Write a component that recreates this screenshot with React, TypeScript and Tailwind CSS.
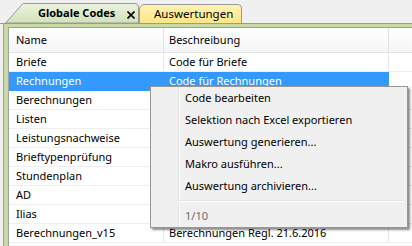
import React from 'react';

const rows: { name: string; desc: string }[] = [
  { name: 'Briefe', desc: 'Code für Briefe' },
  { name: 'Rechnungen', desc: 'Code für Rechnungen' },
  { name: 'Berechnungen', desc: '' },
  { name: 'Listen', desc: '' },
  { name: 'Leistungsnachweise', desc: '' },
  { name: 'Brieftypenprüfung', desc: '' },
  { name: 'Stundenplan', desc: '' },
  { name: 'AD', desc: '' },
  { name: 'Ilias', desc: '' },
  { name: 'Berechnungen_v15', desc: 'Berechnungen Regl. 21.6.2016' },
];

const menuItems = [
  'Code bearbeiten',
  'Selektion nach Excel exportieren',
  'Auswertung generieren...',
  'Makro ausführen...',
  'Auswertung archivieren...',
];

const font = { fontFamily: '"Noto Sans", "Open Sans", sans-serif' };

export default function App() {
  return (
    <div
      className="relative w-[412px] h-[246px] overflow-hidden bg-[#f0f0f0] flex flex-col text-[11px] text-black"
      style={font}
    >
      {/* tabs */}
      <div className="h-[24px] flex items-end pl-[5px] border-b border-[#9a9a9a]">
        <div className="relative h-[20px] w-[134px] flex items-center">
          <svg className="absolute inset-0" width="134" height="20" viewBox="0 0 134 20">
            <defs>
              <linearGradient id="g1" x1="0" y1="0" x2="0" y2="1">
                <stop offset="0" stopColor="#ecf2e0" />
                <stop offset="1" stopColor="#d3e2b8" />
              </linearGradient>
            </defs>
            <path d="M0.5 20 L18 0.5 L130 0.5 Q133.5 0.5 133.5 4 L133.5 20 Z" fill="url(#g1)" stroke="#9a9a9a" />
          </svg>
          <span className="relative ml-[33px] font-bold text-[11px]">Globale Codes</span>
          <svg className="absolute left-[122px] top-[8px]" width="8" height="8" viewBox="0 0 8 8">
            <path d="M0.5 0.5 L7.5 7.5 M7.5 0.5 L0.5 7.5" stroke="#000" strokeWidth="1.6" />
          </svg>
        </div>
        <div className="relative h-[20px] w-[103px] flex items-center -mb-px">
          <svg className="absolute inset-0" width="103" height="20" viewBox="0 0 103 20">
            <defs>
              <linearGradient id="g2" x1="0" y1="0" x2="0" y2="1">
                <stop offset="0" stopColor="#fff3b4" />
                <stop offset="1" stopColor="#fde486" />
              </linearGradient>
            </defs>
            <path d="M0.5 20 L0.5 4 L3.5 0.5 L99 0.5 Q102.5 0.5 102.5 4 L102.5 19.5 L0.5 19.5" fill="url(#g2)" stroke="#9a9a9a" />
          </svg>
          <span className="relative ml-[15px] text-[11.5px]">Auswertungen</span>
        </div>
      </div>

      {/* panel */}
      <div className="flex-1 ml-[3px] bg-[#c8dba6] border-l border-[#a0a0a0] pt-[3px] pl-[4px] flex flex-col">
        <div className="flex-1 bg-white border-t border-l border-[#a0a0a0] flex flex-col">
          <div className="h-[25px] flex bg-gradient-to-b from-white to-[#f4f5f7] border-b border-[#e3e3e3]">
            <div className="w-[155px] pl-[7px] flex items-center border-r border-[#e3e3e3]">Name</div>
            <div className="w-[225px] pl-[5px] flex items-center border-r border-[#e3e3e3]">Beschreibung</div>
            <div className="flex-1" />
          </div>
          {rows.map((r, i) => (
            <div
              key={r.name}
              className={
                i === 1
                  ? 'h-[19px] shrink-0 flex bg-[#3399ff] text-white'
                  : 'h-[19px] shrink-0 flex border-b border-[#efefef]'
              }
            >
              <div className={i === 1 ? 'w-[155px] pl-[7px] flex items-center border-r border-[#3399ff]' : 'w-[155px] pl-[7px] flex items-center border-r border-[#e8e8e8]'}>
                {r.name}
              </div>
              <div className={i === 1 ? 'w-[225px] pl-[5px] flex items-center' : 'w-[225px] pl-[5px] flex items-center border-r border-[#e8e8e8]'}>
                {r.desc}
              </div>
              <div className={i === 1 ? 'flex-1 bg-white' : 'flex-1'} />
            </div>
          ))}
        </div>
      </div>

      {/* context menu */}
      <div className="absolute left-[150px] top-[86px] w-[258px] h-[142px] bg-[#f0f0f0] border border-[#979797] shadow-[2px_2px_2px_rgba(0,0,0,0.45)] flex">
        <div className="w-[28px] border-r border-[#e2e3e3]" />
        <div className="flex-1 border-l border-white flex flex-col">
          {menuItems.map((m) => (
            <div key={m} className="h-[22px] pl-[5px] flex items-center">
              {m}
            </div>
          ))}
          <div className="h-[8px] flex items-center -ml-[2px] mr-[3px]">
            <div className="flex-1 border-t border-[#e2e3e3] border-b border-b-white" />
          </div>
          <div className="h-[22px] pl-[5px] flex items-center text-[#6d6d6d]">1/10</div>
        </div>
      </div>
    </div>
  );
}
